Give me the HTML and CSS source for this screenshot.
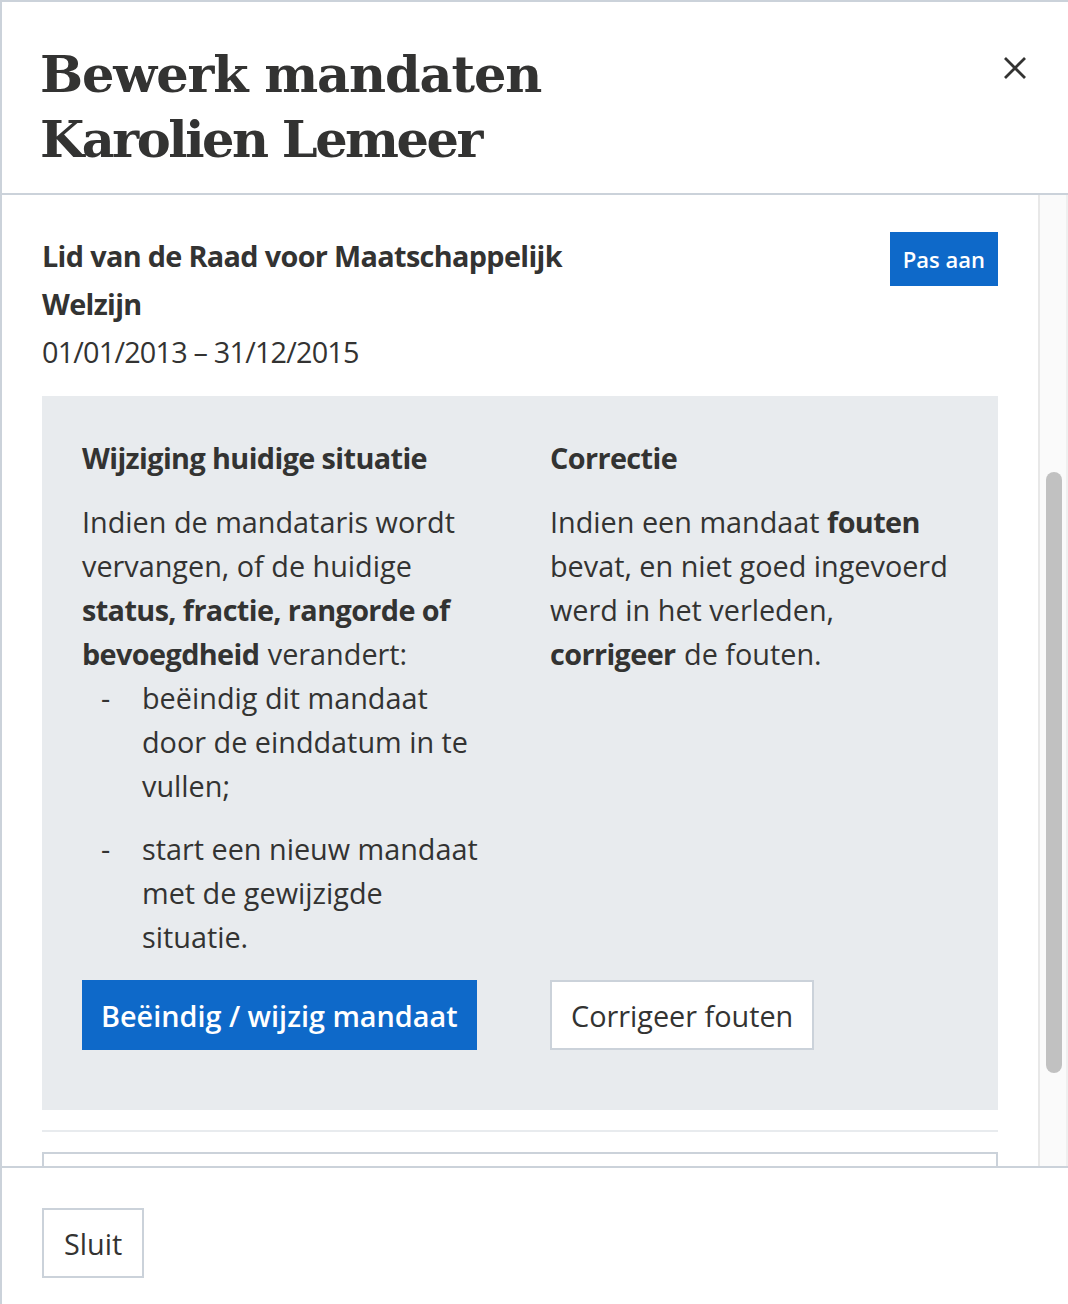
FILE: index.html
```html
<!DOCTYPE html>
<html lang="nl">
<head>
<meta charset="utf-8">
<title>Bewerk mandaten</title>
<link rel="stylesheet" href="styles.css">
</head>
<body>
<div class="modal">
  <header class="modal-header">
    <h1 class="modal-title"><span class="title-line">Bewerk mandaten</span><span class="title-line title-name">Karolien Lemeer</span></h1>
    <button class="close" aria-label="Sluit">
      <svg width="24" height="24" viewBox="0 0 24 24"><path d="M2 2 L22 22 M22 2 L2 22" stroke="#333332" stroke-width="2.8" fill="none"/></svg>
    </button>
  </header>
  <div class="modal-body">
    <div class="body-content">
      <div class="mandate-head">
        <div class="mandate-info">
          <p class="mandate-name">Lid van de Raad voor Maatschappelijk Welzijn</p>
          <p class="mandate-date">01/01/2013 – 31/12/2015</p>
        </div>
        <button class="btn btn-primary btn-small">Pas aan</button>
      </div>
      <div class="info-box">
        <div class="info-col">
          <h2 class="info-title">Wijziging huidige situatie</h2>
          <p class="info-text">Indien de mandataris wordt vervangen, of de huidige <strong>status, fractie, rangorde of bevoegdheid</strong> verandert:</p>
          <ul class="dash-list">
            <li>beëindig dit mandaat door de einddatum in te vullen;</li>
            <li>start een nieuw mandaat met de gewijzigde situatie.</li>
          </ul>
          <button class="btn btn-primary btn-large">Beëindig / wijzig mandaat</button>
        </div>
        <div class="info-col">
          <h2 class="info-title">Correctie</h2>
          <p class="info-text">Indien een mandaat <strong>fouten</strong> bevat, en niet goed ingevoerd werd in het verleden, <strong>corrigeer</strong> de fouten.</p>
          <button class="btn btn-secondary btn-large">Corrigeer fouten</button>
        </div>
      </div>
      <hr class="divider">
      <div class="next-item"></div>
    </div>
    <div class="scrollbar"><div class="scroll-thumb"></div></div>
  </div>
  <footer class="modal-footer">
    <button class="btn btn-secondary btn-large btn-close">Sluit</button>
  </footer>
</div>
</body>
</html>
```
FILE: styles.css
```css
* { box-sizing: border-box; }
html, body { margin: 0; padding: 0; background: #fff; }
body {
  font-family: "Open Sans", "Noto Sans", sans-serif;
  color: #333332;
}
.modal {
  width: 1068px;
  height: 1304px;
  border-left: 2px solid #cbd2da;
  border-top: 2px solid #cbd2da;
  display: flex;
  flex-direction: column;
  overflow: hidden;
}
.modal-header {
  flex: none;
  display: flex;
  justify-content: space-between;
  align-items: flex-start;
  padding: 40px 40px 21px 40px;
  border-bottom: 2px solid #cbd2da;
  height: 193px;
}
.modal-title {
  margin: 0 0 0 -2px;
  font-family: "DejaVu Serif", serif;
  font-weight: 700;
  font-size: 51px;
  line-height: 65px;
  letter-spacing: -1.1px;
  color: #333332;
}
.title-line { display: block; }
.title-name { letter-spacing: -2.5px; }
.close {
  border: 0;
  background: none;
  padding: 0;
  margin-top: 14px;
  margin-right: 1px;
  width: 24px;
  height: 24px;
  cursor: pointer;
}
.close svg { display: block; }
.modal-body {
  flex: none;
  display: flex;
  height: 971px;
  overflow: hidden;
}
.body-content {
  flex: 1;
  padding: 37px 40px 0 40px;
  overflow: hidden;
}
.scrollbar {
  width: 30px;
  flex: none;
  background: #fafafa;
  border-left: 2px solid #e8e8e8;
  border-right: 2px solid #efefef;
}
.scroll-thumb {
  width: 16px;
  height: 601px;
  margin-top: 277px;
  margin-left: 6px;
  background: #c1c1c1;
  border-radius: 8px;
}
.mandate-head {
  display: flex;
  justify-content: space-between;
  align-items: flex-start;
}
.mandate-info { width: 540px; }
.mandate-name {
  margin: 0;
  font-weight: 700;
  font-size: 28.8px;
  line-height: 48px;
  letter-spacing: -0.65px;
}
.mandate-date {
  margin: 0;
  font-size: 28.8px;
  line-height: 48px;
  letter-spacing: -0.8px;
}
.btn {
  font-family: "Open Sans", "Noto Sans", sans-serif;
  border: 0;
  cursor: pointer;
  display: inline-flex;
  align-items: center;
}
.btn-primary { background: #0e69c9; color: #fff; }
.btn-secondary { background: #fff; color: #333332; border: 2px solid #cbd2da; }
.btn-small {
  height: 54px;
  padding: 0 13px;
  font-size: 22px;
  font-weight: 600;
}
.btn-large {
  height: 70px;
  padding: 0 19px;
  font-size: 28.8px;
}
.btn-primary.btn-large { padding: 0 19px; font-weight: 600; }
.btn-close { padding: 0 20px; }
.info-box {
  margin-top: 20px;
  background: #e8ebee;
  padding: 40px 40px 60px 40px;
  display: grid;
  grid-template-columns: 405px 408px;
  column-gap: 63px;
}
.info-col {
  display: flex;
  flex-direction: column;
  align-items: flex-start;
}
.info-title {
  margin: 0 0 20px 0;
  font-size: 28.8px;
  line-height: 44px;
  font-weight: 700;
  letter-spacing: -0.6px;
}
.info-text {
  margin: 0;
  font-size: 28.8px;
  line-height: 44px;
}
.info-text strong { font-weight: 700; letter-spacing: -0.6px; margin-right: 1px; }
.dash-list {
  list-style: none;
  margin: 0;
  padding: 0 0 0 60px;
  font-size: 28.8px;
  line-height: 44px;
}
.dash-list li { position: relative; }
.dash-list li + li { margin-top: 19px; }
.dash-list li::before {
  content: "-";
  position: absolute;
  left: -41px;
  top: 0;
}
.info-col .btn-large { margin-top: auto; }
.info-col .dash-list + .btn-large { margin-top: 21px; }
.divider {
  margin: 20px 0 0 0;
  border: 0;
  border-top: 2px solid #e8ebee;
  height: 0;
}
.next-item {
  margin-top: 20px;
  height: 100px;
  border: 2px solid #cbd2da;
}
.modal-footer {
  flex: none;
  border-top: 2px solid #cbd2da;
  padding: 40px;
}
```
